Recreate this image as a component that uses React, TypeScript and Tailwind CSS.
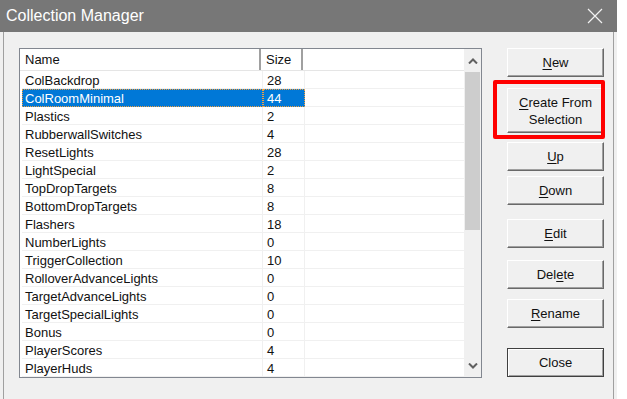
import { Fragment } from 'react';

const ROWS: [string, string][] = [
  ['ColBackdrop', '28'],
  ['ColRoomMinimal', '44'],
  ['Plastics', '2'],
  ['RubberwallSwitches', '4'],
  ['ResetLights', '28'],
  ['LightSpecial', '2'],
  ['TopDropTargets', '8'],
  ['BottomDropTargets', '8'],
  ['Flashers', '18'],
  ['NumberLights', '0'],
  ['TriggerCollection', '10'],
  ['RolloverAdvanceLights', '0'],
  ['TargetAdvanceLights', '0'],
  ['TargetSpecialLights', '0'],
  ['Bonus', '0'],
  ['PlayerScores', '4'],
  ['PlayerHuds', '4'],
];

function Btn({ label, u, tall, isDefault }: { label: React.ReactNode; u?: number; tall?: boolean; isDefault?: boolean }) {
  const text = typeof label === 'string' && u !== undefined ? (
    <>
      {label.slice(0, u)}
      <span className="underline underline-offset-2">{label[u]}</span>
      {label.slice(u + 1)}
    </>
  ) : label;
  return (
    <div
      className={
        'flex w-[97px] items-center justify-center bg-[#f0f0f0] text-center text-[13px] leading-[17px] text-[#111] ' +
        (tall ? 'h-[45px] ' : 'h-[29px] ') +
        (isDefault
          ? 'border border-[#404040] shadow-[inset_1px_1px_0_#fff,inset_-1px_-1px_0_#a0a0a0]'
          : 'border-t border-l border-t-white border-l-white border-r border-b border-r-[#696969] border-b-[#696969] shadow-[inset_-1px_-1px_0_#a0a0a0]')
      }
    >
      <span>{text}</span>
    </div>
  );
}

export default function App() {
  return (
    <div className="h-[399px] w-[627px] overflow-hidden bg-white" style={{ fontFamily: '"Liberation Sans", Arial, sans-serif' }}>
      <div className="flex h-full w-[617px] flex-col">
        <div className="flex h-[32px] shrink-0 items-center justify-between bg-[#777777] pl-[6px] pr-[13px]">
          <span className="text-[16px] text-white">Collection Manager</span>
          <svg width="16" height="16" viewBox="0 0 16 16" className="mr-[1px]">
            <path d="M1 1 L15 15 M15 1 L1 15" stroke="#f2f2f2" strokeWidth="1.2" fill="none" />
          </svg>
        </div>

        <div className="flex flex-1 border-x-[3px] border-x-[#f0f0f0] bg-[#f0f0f0] shadow-[inset_1px_0_0_#a0a0a0,inset_-1px_0_0_#a0a0a0]">
          <div className="flex flex-1 gap-[25px] pl-[16px] pt-[16px]">
            {/* list view */}
            <div className="relative flex h-[330px] w-[463px] border border-[#828790] bg-white">
              <div className="flex flex-1 flex-col overflow-hidden">
                <div className="flex h-[22px] shrink-0 border-b border-[#e5e5e5] text-[13px] text-[#111]">
                  <div className="flex w-[241px] items-center border-r-2 border-[#a0a0a0] pl-[5px]">Name</div>
                  <div className="flex w-[42px] items-center border-r-2 border-[#a0a0a0] pl-[5px]">Size</div>
                  <div className="flex-1" />
                </div>
                <div className="grid grid-cols-[241px_42px_1fr] pl-[2px] text-[13px] leading-[19px]">
                  {ROWS.map(([name, size], i) => {
                    const sel = i === 1;
                    return (
                      <Fragment key={name}>
                        <div
                          className={
                            'h-[18px] whitespace-nowrap border-b pl-[3px] ' +
                            (sel
                              ? 'border-[#0078d7] bg-[#0078d7] text-white outline-1 outline-dotted outline-offset-[-1px] outline-[#f0a040]'
                              : 'border-[#f0f0f0] border-r text-[#111]')
                          }
                        >
                          {name}
                        </div>
                        <div
                          className={
                            'h-[18px] border-b pl-[4px] ' +
                            (sel
                              ? 'border-[#0078d7] bg-[#0078d7] text-white outline-1 outline-dotted outline-offset-[-1px] outline-[#f0a040]'
                              : 'border-r border-[#f0f0f0] text-[#111]')
                          }
                        >
                          {size}
                        </div>
                        <div className="h-[18px] border-b border-[#f0f0f0]" />
                      </Fragment>
                    );
                  })}
                </div>
              </div>
              {/* scrollbar */}
              <div className="flex w-[17px] shrink-0 flex-col bg-[#f0f0f0]">
                <div className="flex h-[23px] items-center justify-center">
                  <svg width="10" height="6" viewBox="0 0 10 6">
                    <path d="M1 5.5 L5 1.5 L9 5.5" stroke="#606060" strokeWidth="2" fill="none" />
                  </svg>
                </div>
                <div className="mx-[1px] h-[158px] bg-[#cdcdcd]" />
                <div className="flex-1" />
                <div className="flex h-[23px] items-center justify-center">
                  <svg width="10" height="6" viewBox="0 0 10 6">
                    <path d="M1 0.5 L5 4.5 L9 0.5" stroke="#606060" strokeWidth="2" fill="none" />
                  </svg>
                </div>
              </div>
            </div>

            {/* buttons */}
            <div className="flex flex-col">
              <Btn label="New" u={0} />
              <div className="relative mt-[11px]">
                <Btn
                  tall
                  label={
                    <>
                      <span className="underline underline-offset-2">C</span>reate From
                      <br />
                      Selection
                    </>
                  }
                />
                <div className="absolute left-[-14px] top-[-8px] h-[59px] w-[112px] rounded-[2px] border-4 border-[#ff0000]" />
              </div>
              <div className="mt-[9px]">
                <Btn label="Up" u={0} />
              </div>
              <div className="mt-[5px]">
                <Btn label="Down" u={0} />
              </div>
              <div className="mt-[14px]">
                <Btn label="Edit" u={0} />
              </div>
              <div className="mt-[12px]">
                <Btn label="Delete" u={3} />
              </div>
              <div className="mt-[10px]">
                <Btn label="Rename" u={0} />
              </div>
              <div className="mt-[20px]">
                <Btn label="Close" isDefault />
              </div>
            </div>
          </div>
        </div>
      </div>
    </div>
  );
}
